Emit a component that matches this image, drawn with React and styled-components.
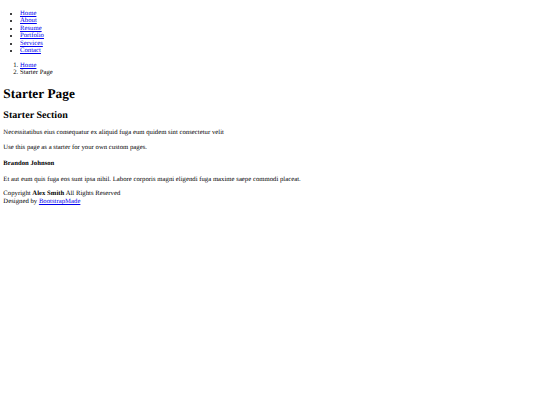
import React from 'react';
import styled, { createGlobalStyle } from 'styled-components';

// the page is shown at 5/12 of its normal size, so every default is scaled
const GlobalStyle = createGlobalStyle`
    html {
        font-size: 6.667px;
    }
    body {
        margin: 3.333px;
        font-family: "Liberation Serif", "Times New Roman", serif;
        font-size: 6.667px;
        line-height: 7.5px;
        letter-spacing: 0.035px;
        color: #000;
        background: #fff;
        text-rendering: geometricPrecision;
    }
    a {
        color: #0000ee;
    }
`;

const NavMenu = styled.ul`
    margin: 6.667px 0;
    padding-left: 16.667px;
    list-style: disc;
`;

const Crumbs = styled.ol`
    margin: 6.667px 0;
    padding-left: 16.667px;
`;

const Title = styled.h1`
    font-size: 13.333px;
    line-height: 15.417px;
    margin: 8.933px 0;
`;

const SectionTitle = styled.h2`
    font-size: 10px;
    line-height: 11.25px;
    margin: 8.3px 0;
`;

const Name = styled.h4`
    font-size: 6.667px;
    margin: 8.867px 0;
`;

const Text = styled.p`
    margin: 6.667px 0;
`;

const links = ['Home', 'About', 'Resume', 'Portfolio', 'Services', 'Contact'];

const App = () => (
    <>
        <GlobalStyle />
        <header>
            <nav>
                <NavMenu>
                    {links.map((l) => (
                        <li key={l}>
                            <a href="#">{l}</a>
                        </li>
                    ))}
                </NavMenu>
            </nav>
        </header>
        <main>
            <Crumbs>
                <li>
                    <a href="#">Home</a>
                </li>
                <li>Starter Page</li>
            </Crumbs>
            <Title>Starter Page</Title>
            <section>
                <SectionTitle>Starter Section</SectionTitle>
                <Text>Necessitatibus eius consequatur ex aliquid fuga eum quidem sint consectetur velit</Text>
                <Text>Use this page as a starter for your own custom pages.</Text>
                <Name>Brandon Johnson</Name>
                <Text>Et aut eum quis fuga eos sunt ipsa nihil. Labore corporis magni eligendi fuga maxime saepe commodi placeat.</Text>
            </section>
        </main>
        <footer>
            <div>
                Copyright <strong>Alex Smith</strong> All Rights Reserved
            </div>
            <div>
                Designed by <a href="#">BootstrapMade</a>
            </div>
        </footer>
    </>
);

export default App;
